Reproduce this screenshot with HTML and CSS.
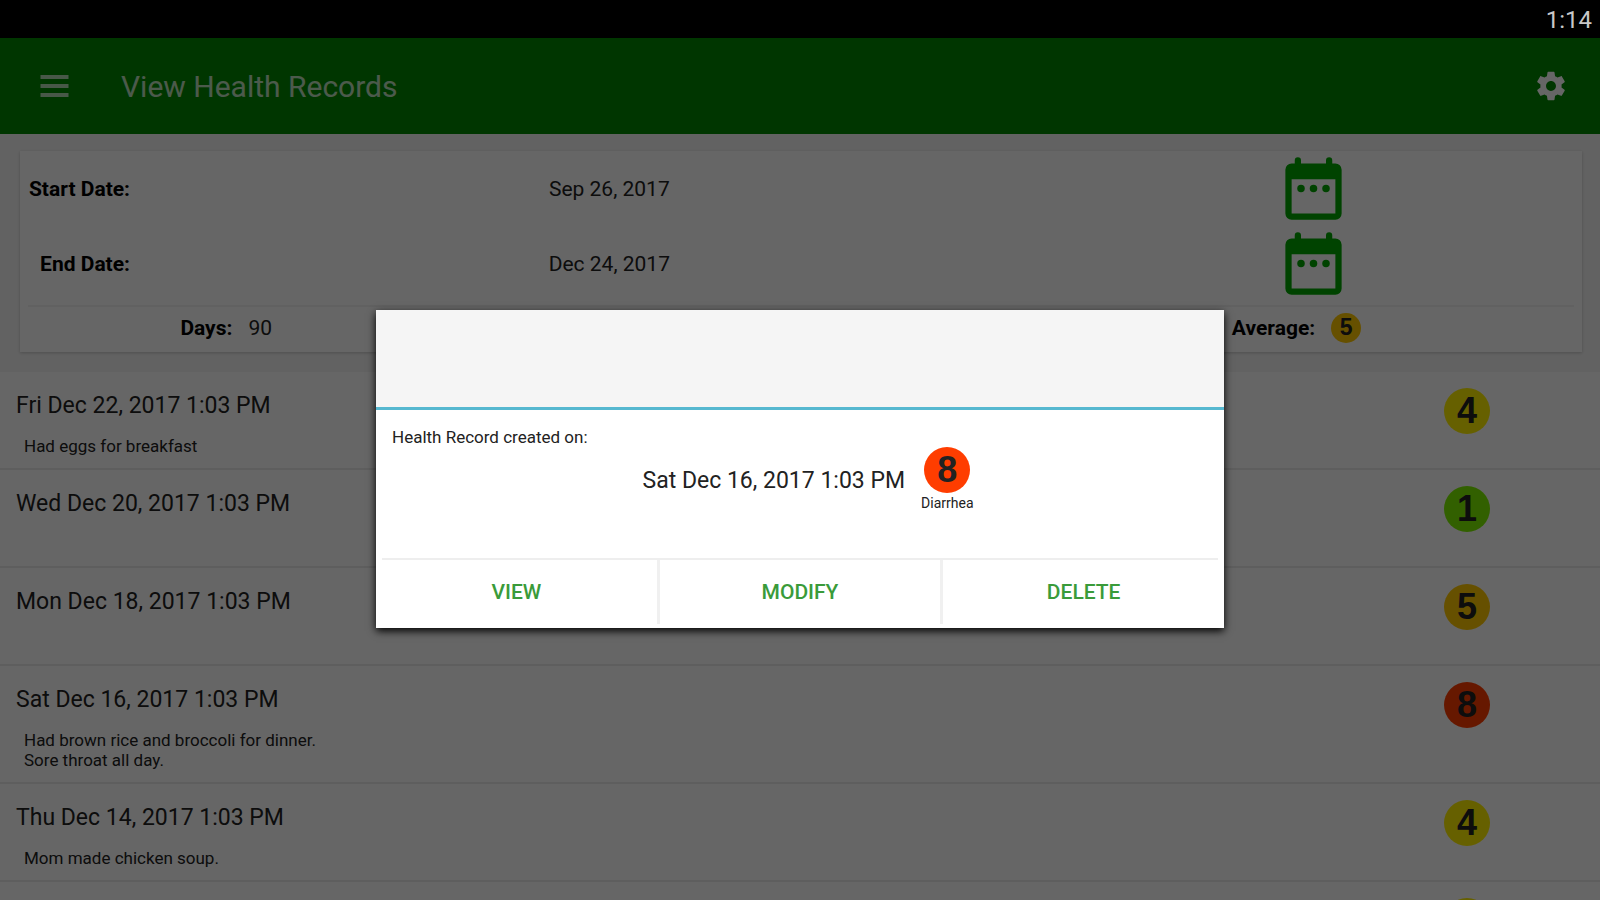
FILE: index.html
```html
<!DOCTYPE html>
<html lang="en">
<head>
    <meta charset="UTF-8">
    <meta name="viewport" content="width=device-width, initial-scale=1.0">
    <title>View Health Records</title>
    <link rel="stylesheet" href="styles.css">
</head>
<body>

    <div class="status-bar">1:14</div>

    <div class="app">
        <header class="toolbar">
            <button type="button" class="icon-button" aria-label="Menu">
                <svg class="menu-icon" viewBox="0 0 28 22"><path d="M0 0h28v4H0zM0 9h28v4H0zM0 18h28v4H0z"/></svg>
            </button>
            <h1>View Health Records</h1>
            <button type="button" class="icon-button" aria-label="Settings">
                <svg class="settings-icon" viewBox="0 0 24 24"><path d="M19.43 12.98c.04-.32.07-.64.07-.98s-.03-.66-.07-.98l2.11-1.65c.19-.15.24-.42.12-.64l-2-3.46c-.12-.22-.39-.3-.61-.22l-2.49 1c-.52-.4-1.08-.73-1.69-.98l-.38-2.65C14.46 2.18 14.25 2 14 2h-4c-.25 0-.46.18-.49.42l-.38 2.65c-.61.25-1.17.59-1.69.98l-2.49-1c-.23-.09-.49 0-.61.22l-2 3.46c-.13.22-.07.49.12.64l2.11 1.65c-.04.32-.07.65-.07.98s.03.66.07.98l-2.11 1.65c-.19.15-.24.42-.12.64l2 3.46c.12.22.39.3.61.22l2.49-1c.52.4 1.08.73 1.69.98l.38 2.65c.03.24.24.42.49.42h4c.25 0 .46-.18.49-.42l.38-2.65c.61-.25 1.17-.59 1.69-.98l2.49 1c.23.09.49 0 .61-.22l2-3.46c.12-.22.07-.49-.12-.64l-2.11-1.65zM12 15.5c-1.93 0-3.5-1.57-3.5-3.5s1.57-3.5 3.5-3.5 3.5 1.57 3.5 3.5-1.57 3.5-3.5 3.5z"/></svg>
            </button>
        </header>

        <main>
            <section class="summary">
                <div class="date-row">
                    <b>Start Date:</b>
                    <span>Sep 26, 2017</span>
                    <button type="button" class="icon-button" aria-label="Pick start date">
                        <svg class="calendar-icon" viewBox="0 0 24 24"><path d="M19 4h-1V3a1 1 0 0 0-2 0v1H8V3a1 1 0 0 0-2 0v1H5a2 2 0 0 0-2 2v14a2 2 0 0 0 2 2h14a2 2 0 0 0 2-2V6a2 2 0 0 0-2-2zm0 16H5V9h14z"/><circle cx="8" cy="12" r="1.2"/><circle cx="12" cy="12" r="1.2"/><circle cx="16" cy="12" r="1.2"/></svg>
                    </button>
                </div>
                <div class="date-row">
                    <b>End Date:</b>
                    <span>Dec 24, 2017</span>
                    <button type="button" class="icon-button" aria-label="Pick end date">
                        <svg class="calendar-icon" viewBox="0 0 24 24"><path d="M19 4h-1V3a1 1 0 0 0-2 0v1H8V3a1 1 0 0 0-2 0v1H5a2 2 0 0 0-2 2v14a2 2 0 0 0 2 2h14a2 2 0 0 0 2-2V6a2 2 0 0 0-2-2zm0 16H5V9h14z"/><circle cx="8" cy="12" r="1.2"/><circle cx="12" cy="12" r="1.2"/><circle cx="16" cy="12" r="1.2"/></svg>
                    </button>
                </div>
                <div class="totals">
                    <div class="total"><b>Days:</b> <span>90</span></div>
                    <div class="total average"><b>Average:</b> <span class="score score-small level-5">5</span></div>
                </div>
            </section>

            <ul class="records">
                <li>
                    <div class="record-text">
                        <h2>Fri Dec 22, 2017 1:03 PM</h2>
                        <p>Had eggs for breakfast</p>
                    </div>
                    <span class="score level-4">4</span>
                </li>
                <li>
                    <div class="record-text">
                        <h2>Wed Dec 20, 2017 1:03 PM</h2>
                    </div>
                    <span class="score level-1">1</span>
                </li>
                <li>
                    <div class="record-text">
                        <h2>Mon Dec 18, 2017 1:03 PM</h2>
                    </div>
                    <span class="score level-5">5</span>
                </li>
                <li>
                    <div class="record-text">
                        <h2>Sat Dec 16, 2017 1:03 PM</h2>
                        <p>Had brown rice and broccoli for dinner.<br>Sore throat all day.</p>
                    </div>
                    <span class="score level-8">8</span>
                </li>
                <li>
                    <div class="record-text">
                        <h2>Thu Dec 14, 2017 1:03 PM</h2>
                        <p>Mom made chicken soup.</p>
                    </div>
                    <span class="score level-4">4</span>
                </li>
                <li>
                    <div class="record-text"></div>
                    <span class="score level-4"></span>
                </li>
            </ul>
        </main>

        <div class="backdrop">
            <div class="dialog" role="dialog" aria-label="Health Record">
                <div class="dialog-title"></div>
                <div class="dialog-body">
                    <p>Health Record created on:</p>
                    <div class="dialog-record">
                        <span class="dialog-date">Sat Dec 16, 2017 1:03 PM</span>
                        <div class="symptom">
                            <span class="score level-8">8</span>
                            <small>Diarrhea</small>
                        </div>
                    </div>
                </div>
                <div class="dialog-buttons">
                    <button type="button">VIEW</button>
                    <button type="button">MODIFY</button>
                    <button type="button">DELETE</button>
                </div>
            </div>
        </div>
    </div>

</body>
</html>
```
FILE: styles.css
```css
* {
    box-sizing: border-box;
}

body {
    font-family: Roboto, sans-serif;
    margin: 0;
    height: 100vh;
    display: flex;
    flex-direction: column;
    overflow: hidden;
    background-color: #000;
    color: #222;
}

h1, h2, p {
    margin: 0;
    font-weight: normal;
}

button {
    font-family: inherit;
    border: none;
    background: none;
    padding: 0;
    cursor: pointer;
}

.status-bar {
    height: 38px;
    padding-right: 8px;
    line-height: 40px;
    font-size: 24px;
    text-align: right;
    color: #c8c8c8;
}

.app {
    position: relative;
    flex: 1;
    min-height: 0;
    overflow: hidden;
    background-color: #f5f5f5;
}

.toolbar {
    display: flex;
    align-items: center;
    height: 96px;
    padding: 0 32px 0 40px;
    background-color: #008700;
    color: #fff;
}

.toolbar h1 {
    flex: 1;
    margin-left: 52px;
    font-size: 30px;
    opacity: 0.75;
}

.icon-button {
    display: flex;
}

.icon-button svg {
    fill: currentColor;
}

.toolbar .icon-button {
    color: #fff;
}

.menu-icon {
    width: 29px;
    height: 22px;
    opacity: 0.7;
}

.settings-icon {
    width: 34px;
    height: 34px;
}

.summary {
    margin: 17px 18px 20px 20px;
    background-color: #fff;
    box-shadow: 0 1px 3px rgba(0, 0, 0, 0.2);
    font-size: 21px;
}

.summary b {
    color: #000;
}

.date-row {
    display: grid;
    grid-template-columns: 110px 2fr 1fr;
    column-gap: 30px;
    align-items: center;
    justify-items: center;
    height: 75px;
    padding-right: 44px;
}

.date-row b {
    justify-self: end;
}

.date-row .icon-button {
    color: #00a800;
}

.calendar-icon {
    width: 75px;
    height: 75px;
}

.totals {
    display: grid;
    grid-template-columns: 10fr 15fr 14fr;
    height: 47px;
    margin: 4px 8px 0;
    border-top: 2px solid #f2f2f2;
}

.total {
    display: flex;
    align-items: center;
    justify-content: center;
    gap: 16px;
    padding-bottom: 4px;
}

.average {
    grid-column: 3;
}

.score {
    display: flex;
    align-items: center;
    justify-content: center;
    flex: none;
    width: 46px;
    height: 46px;
    border-radius: 50%;
    font-family: "Liberation Sans", sans-serif;
    font-size: 36px;
    font-weight: bold;
    color: #222;
}

.score-small {
    width: 30px;
    height: 30px;
    font-size: 23px;
}

.level-1 {
    background-color: #7ef000;
}

.level-4 {
    background-color: #fff000;
}

.level-5 {
    background-color: #ffc800;
}

.level-8 {
    background-color: #ff3d00;
}

.records {
    list-style: none;
    margin: 0;
    padding: 0;
    background-color: #fff;
}

.records li {
    display: flex;
    min-height: 98px;
    padding: 16px 110px 12px 16px;
    border-bottom: 2px solid #ececec;
}

.record-text {
    flex: 1;
}

.record-text h2 {
    font-size: 23px;
    line-height: 36px;
}

.record-text p {
    padding: 12px 8px 0;
    font-size: 17px;
    line-height: 20px;
}

.backdrop {
    position: absolute;
    inset: 0;
    display: flex;
    align-items: center;
    justify-content: center;
    background-color: rgba(0, 0, 0, 0.6);
}

.dialog {
    width: 53%;
    background-color: #fff;
    box-shadow: 0 3px 8px #000;
}

.dialog-title {
    height: 100px;
    background-color: #f5f5f5;
    border-bottom: 3px solid #56b8d0;
}

.dialog-body {
    height: 150px;
    margin: 0 6px;
    padding: 17px 10px;
    border-bottom: 2px solid #eee;
    font-size: 17px;
}

.dialog-record {
    display: flex;
    justify-content: center;
    gap: 16px;
    padding-left: 16px;
}

.dialog-date {
    padding-top: 20px;
    font-size: 23px;
}

.symptom {
    display: flex;
    flex-direction: column;
    align-items: center;
}

.symptom small {
    font-size: 14px;
    line-height: 20px;
}

.dialog-buttons {
    display: flex;
    height: 68px;
    padding-bottom: 4px;
}

.dialog-buttons button {
    flex: 1;
    font-size: 21px;
    font-weight: 500;
    color: #3a9b3a;
}

.dialog-buttons button + button {
    border-left: 3px solid #f0f0f0;
}
```
